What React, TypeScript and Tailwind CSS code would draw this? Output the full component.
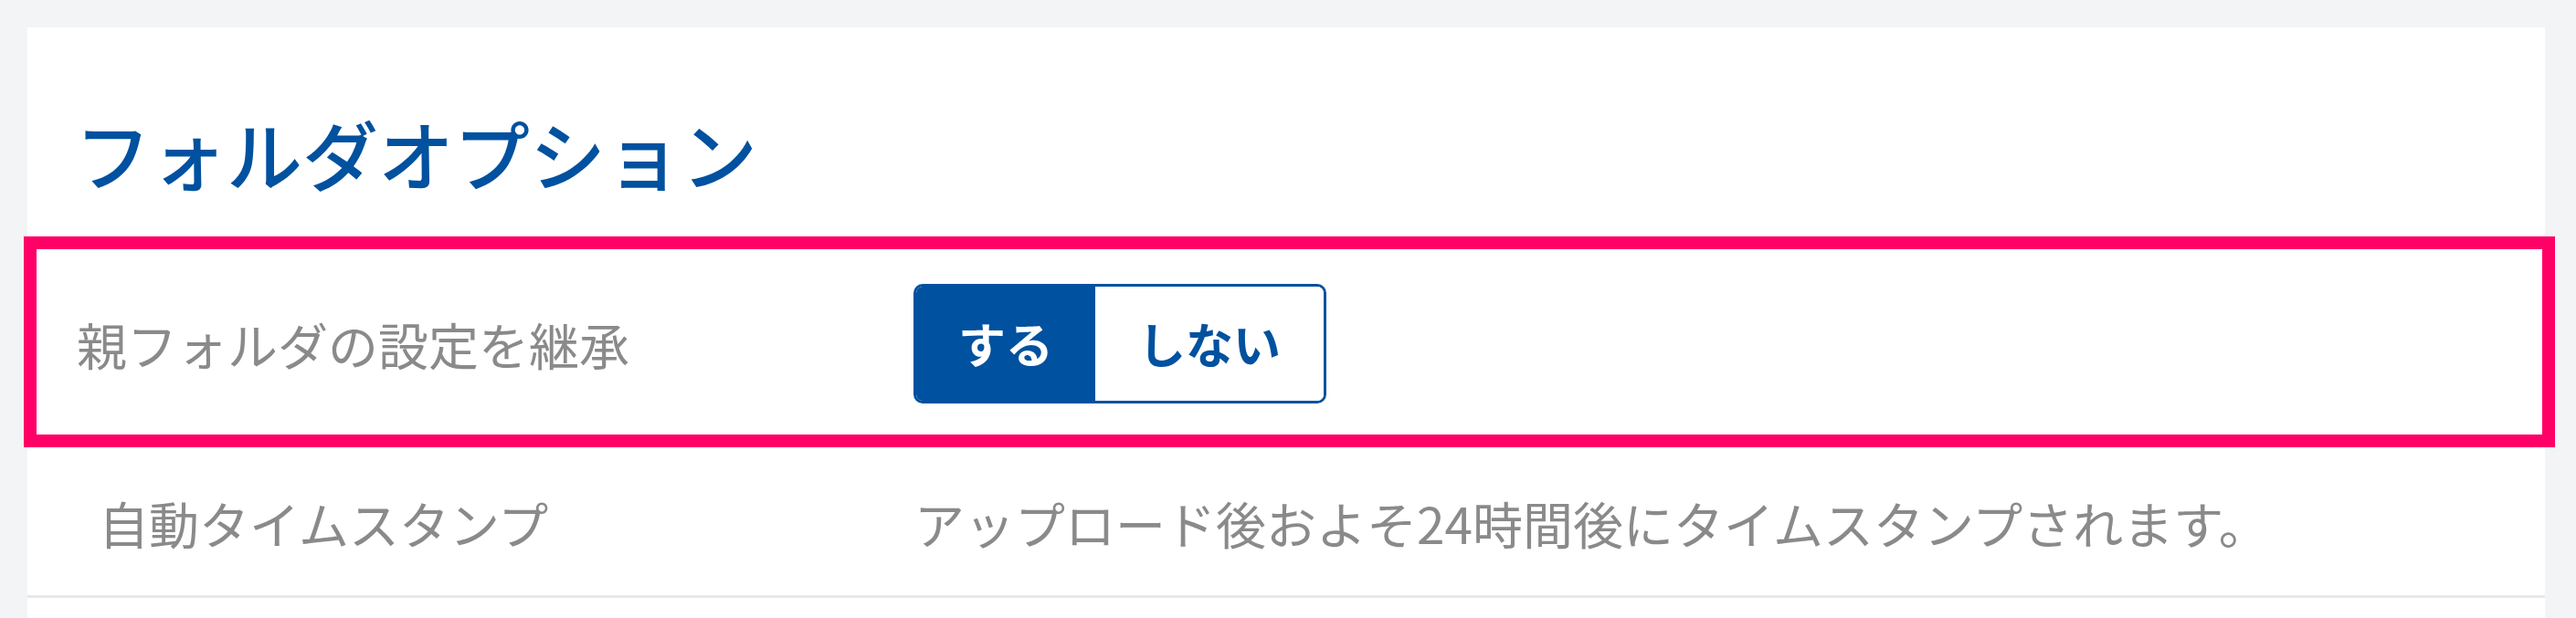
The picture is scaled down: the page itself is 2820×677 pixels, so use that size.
import { useState } from "react";

const jp = "font-['Noto_Sans_CJK_JP','Noto_Sans',sans-serif]";

export default function App() {
  const [inherit, setInherit] = useState(true);

  return (
    <div className={`w-[2820px] h-[677px] overflow-hidden bg-[#f3f4f6] pt-[30px] pl-[30px] pr-[34px] ${jp}`}>
      <div className="bg-white h-[700px]">
        <h1 className="pt-[97px] pl-[52px] text-[83px] leading-[80px] font-medium text-[#00519f]">
          フォルダオプション
        </h1>

        <div className="relative mt-[89px]">
          <div className="flex items-center h-[160px] pl-[54px]">
            <div className="w-[916px] text-[55px] leading-none text-[#8a8a8a]">親フォルダの設定を継承</div>
            <div className="flex h-[131px] border-[3px] border-[#00519f] rounded-[10px] overflow-hidden text-[52px] font-bold leading-none">
              <button
                onClick={() => setInherit(true)}
                className={`px-[46px] flex items-center ${inherit ? "bg-[#00519f] text-white" : "bg-white text-[#00519f]"}`}
              >
                する
              </button>
              <button
                onClick={() => setInherit(false)}
                className={`px-[47px] flex items-center ${!inherit ? "bg-[#00519f] text-white" : "bg-white text-[#00519f]"}`}
              >
                しない
              </button>
            </div>
          </div>
          <div className="absolute -top-[37px] -bottom-[34px] -left-[4px] -right-[11px] border-[14px] border-[#ff0066] pointer-events-none" />
        </div>

        <div className="mt-[36px] flex items-center h-[163px] pl-[78px] border-b-[3px] border-[#e6e8ec]">
          <div className="w-[893px] text-[55px] leading-none text-[#8a8a8a]">自動タイムスタンプ</div>
          <div className="text-[55px] leading-none text-[#8a8a8a]">アップロード後およそ24時間後にタイムスタンプされます。</div>
        </div>
      </div>
    </div>
  );
}
